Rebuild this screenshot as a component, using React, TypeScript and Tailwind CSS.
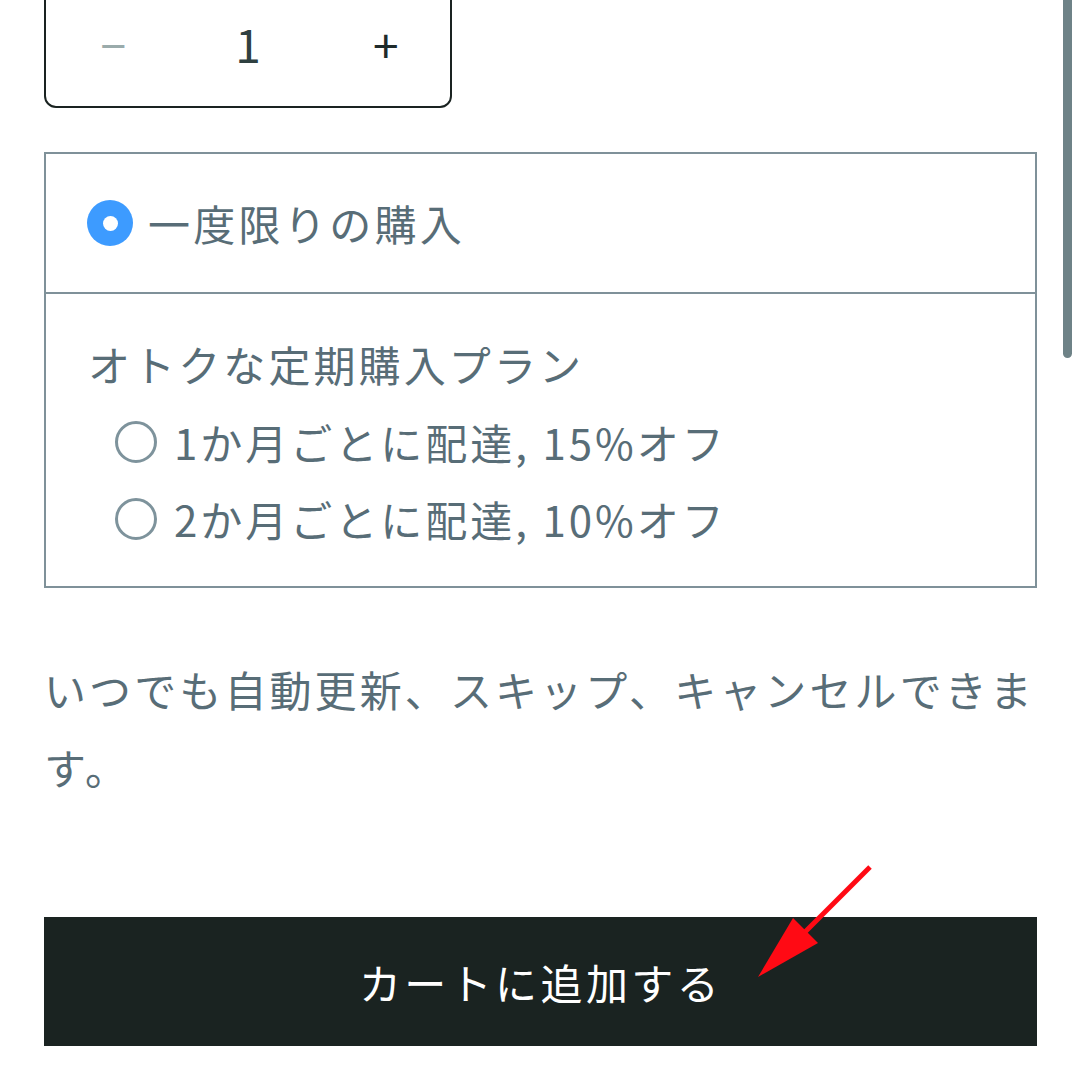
import React from "react";

export default function App() {
  const font = { fontFamily: '"Noto Sans CJK JP", "Noto Sans", sans-serif' };
  return (
    <div
      className="relative w-[1081px] h-[1081px] overflow-hidden bg-white text-[#586d77]"
      style={font}
    >
      <div className="px-[44px]">
        {/* Quantity */}
        <div className="-mt-[22px] w-[408px] h-[130px] border-2 border-[#1a2321] rounded-[12px] grid grid-cols-3 items-center text-center">
          <span className="text-[46px] leading-none text-[#9aabab]">−</span>
          <span className="text-[46px] leading-none text-[#2f4040]">1</span>
          <span className="text-[46px] leading-none text-[#1f2b2b] pl-[6px]">+</span>
        </div>

        {/* Purchase options */}
        <div className="mt-[44px] border-2 border-[#7f9199]">
          <div className="h-[138px] flex items-center pl-[41px] gap-[15px]">
            <span className="w-[46px] h-[46px] rounded-full bg-[#3d9bff] flex items-center justify-center">
              <span className="w-[15px] h-[15px] rounded-full bg-white" />
            </span>
            <span className="text-[42px] tracking-[3.3px] leading-none">一度限りの購入</span>
          </div>
          <div className="border-t-2 border-[#7f9199] pt-[31px] pb-[29px] pl-[42px]">
            <div className="text-[42px] tracking-[3.1px] leading-[78px]">オトクな定期購入プラン</div>
            <div className="pl-[27px]">
              <div className="h-[77px] flex items-center gap-[17px]">
                <span className="w-[42px] h-[42px] rounded-full border-[3px] border-[#7e939c]" />
                <span className="text-[42px] tracking-[3px] leading-none">1か月ごとに配達, 15%オフ</span>
              </div>
              <div className="h-[77px] flex items-center gap-[17px]">
                <span className="w-[42px] h-[42px] rounded-full border-[3px] border-[#7e939c]" />
                <span className="text-[42px] tracking-[3px] leading-none">2か月ごとに配達, 10%オフ</span>
              </div>
            </div>
          </div>
        </div>

        {/* Note */}
        <p className="mt-[62px] text-[42px] tracking-[3.1px] leading-[78px]">
          いつでも自動更新、スキップ、キャンセルできます。
        </p>

        {/* Button */}
        <button className="mt-[111px] w-full h-[129px] bg-[#1a2321] text-white text-[42px] tracking-[3.4px] leading-none flex items-center justify-center">
          カートに追加する
        </button>
      </div>

      {/* Scrollbar */}
      <div className="absolute top-0 left-[1063px] w-[9px] h-[358px] bg-[#6e8287] rounded-b-full" />

      {/* Red annotation arrow */}
      <svg className="absolute left-0 top-0" width="1081" height="1081" viewBox="0 0 1081 1081">
        <line x1="870" y1="867" x2="800" y2="937" stroke="#ff0a14" strokeWidth="5" />
        <polygon points="758,977 793,918 818,943" fill="#ff0a14" />
      </svg>
    </div>
  );
}
